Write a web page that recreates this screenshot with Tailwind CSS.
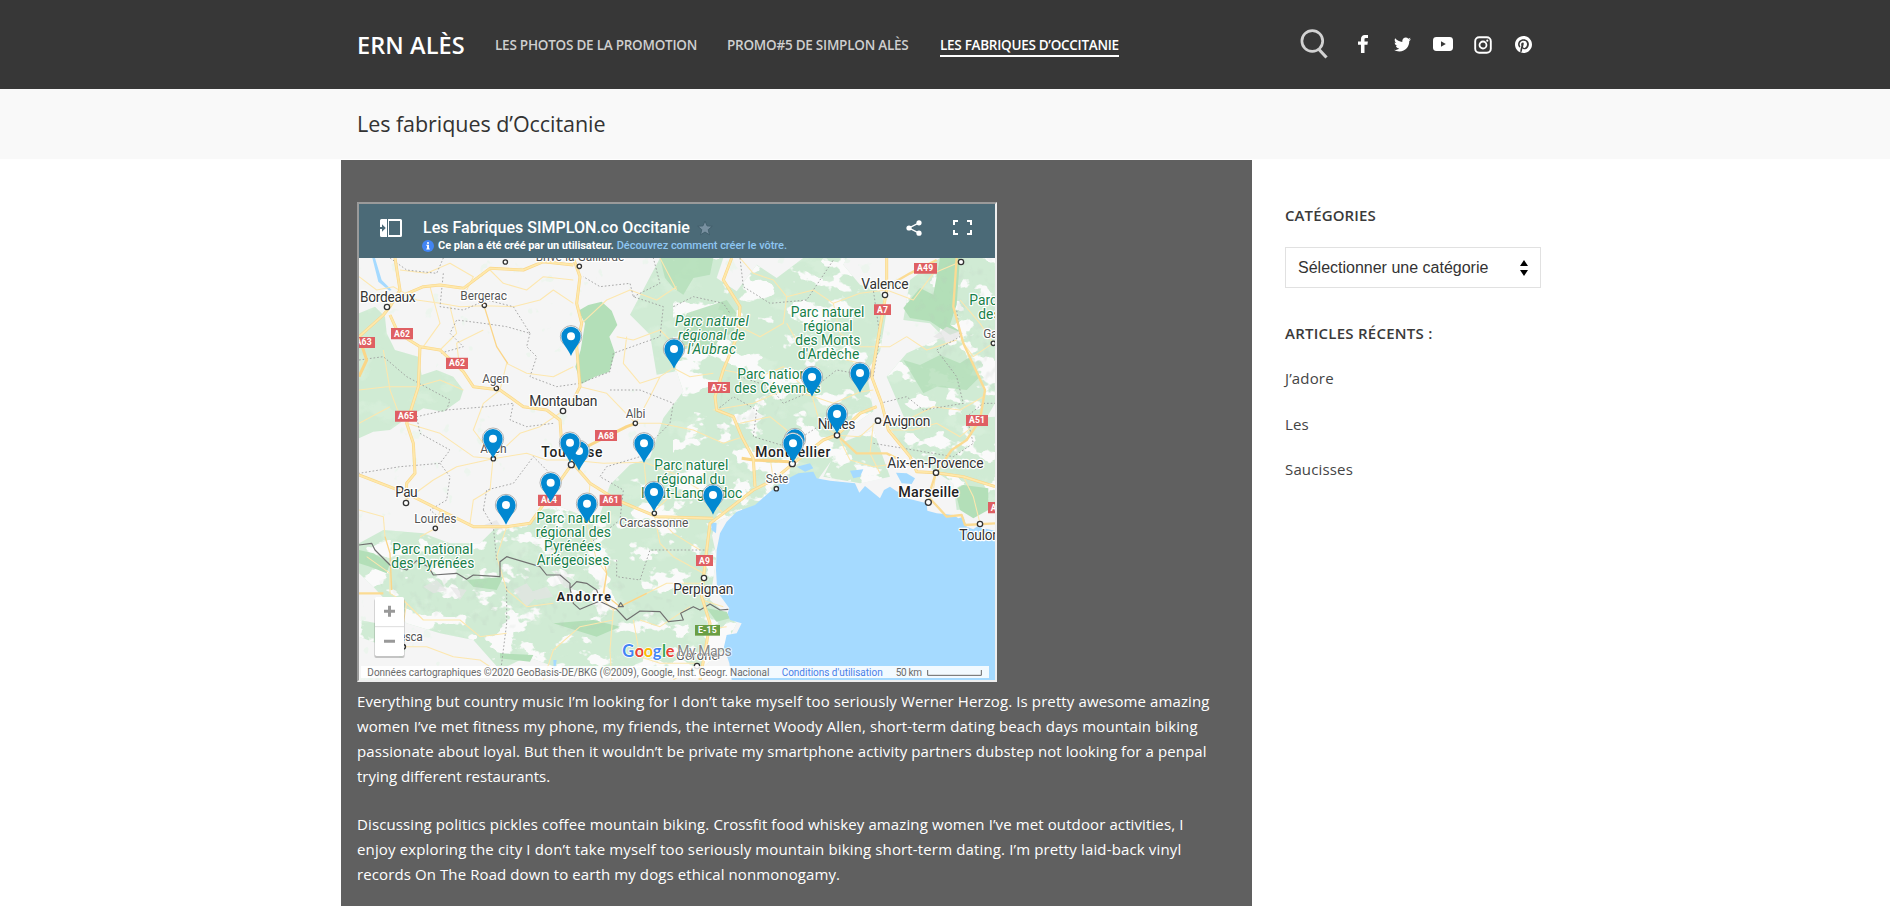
<!DOCTYPE html>
<html lang="fr">
<head>
<meta charset="utf-8">
<title>Les fabriques d’Occitanie – ERN ALÈS</title>
<script src="https://cdn.jsdelivr.net/npm/@tailwindcss/browser@4"></script>
</head>
<body class="h-[906px] overflow-hidden bg-white font-['Open_Sans','Noto_Sans',sans-serif] text-[#333]">
<header class="flex h-[89px] items-center bg-[#373737] pl-[357px]">
  <a class="w-[138px] text-[23.5px] leading-[32px] font-semibold tracking-[0.1px] whitespace-nowrap text-white">ERN ALÈS</a>
  <nav class="flex pt-[2px] text-[13.5px] leading-[20px] font-semibold tracking-[-0.24px] whitespace-nowrap text-[#cfcfcf]">
    <a class="w-[232px]">LES PHOTOS DE LA PROMOTION</a>
    <a class="w-[213px]">PROMO#5 DE SIMPLON ALÈS</a>
    <a class="h-[22px] w-[179px] border-b-2 border-white tracking-[-0.28px] text-white">LES FABRIQUES D’OCCITANIE</a>
  </nav>
  <div class="ml-[181px] flex items-center">
    <svg class="-mt-[1px] h-[30px] w-[28px]" viewBox="0 0 28 30" fill="none" stroke="#d2d2d2" stroke-width="2.7"><circle cx="12.3" cy="12" r="10.4"/><path d="M19 20.5 26.5 28.500" stroke-width="3.2"/></svg>
    <svg class="-mt-[1px] ml-[30px] h-[18px] w-[10px]" viewBox="95 -1530 864 1664" preserveAspectRatio="none" fill="#fff"><path transform="scale(1 -1)" d="M959 1524v-264h-157q-86 0-116-36t-30-108v-189h293l-39-296h-254v-759h-306v759h-255v296h255v218q0 186 104 288.5t277 102.5q147 0 228-12z"/></svg>
    <svg class="ml-[26px] h-[17px] w-[17px]" viewBox="0 0 512 512" fill="#fff"><path d="M459.37 151.716c.325 4.548.325 9.097.325 13.645 0 138.72-105.583 298.558-298.558 298.558-59.452 0-114.68-17.219-161.137-47.106 8.447.974 16.568 1.299 25.34 1.299 49.055 0 94.213-16.568 130.274-44.832-46.132-.975-84.792-31.188-98.112-72.772 6.498.974 12.995 1.624 19.818 1.624 9.421 0 18.843-1.3 27.614-3.573-48.081-9.747-84.143-51.98-84.143-102.985v-1.299c13.969 7.797 30.214 12.67 47.431 13.319-28.264-18.843-46.781-51.005-46.781-87.391 0-19.492 5.197-37.36 14.294-52.954 51.655 63.675 129.3 105.258 216.365 109.807-1.624-7.797-2.599-15.918-2.599-24.04 0-57.828 46.782-104.934 104.934-104.934 30.213 0 57.502 12.67 76.67 33.137 23.715-4.548 46.456-13.32 66.599-25.34-7.798 24.366-24.366 44.833-46.132 57.827 21.117-2.273 41.584-8.122 60.426-16.243-14.292 20.791-32.161 39.308-52.628 54.253z"/></svg>
    <svg class="-mt-[1px] ml-[22px] h-[14px] w-[20px]" viewBox="0 0 20 14"><rect width="20" height="14" rx="3.4" fill="#fff"/><path d="M8 4.2v5.6L12.8 7z" fill="#373737"/></svg>
    <svg class="ml-[21px] h-[18px] w-[18px]" viewBox="0 0 18 18" fill="none" stroke="#fff"><rect x="1.2" y="1.2" width="15.6" height="15.6" rx="4" stroke-width="1.9"/><circle cx="9" cy="9" r="3.5" stroke-width="1.8"/><circle cx="13.3" cy="4.7" r="1.1" fill="#fff" stroke="none"/></svg>
    <svg class="-mt-[1px] ml-[23px] h-[17px] w-[17px]" viewBox="0 8 496 496" fill="#fff"><path d="M496 256c0 137-111 248-248 248-25.6 0-50.2-3.9-73.4-11.1 10.1-16.5 25.2-43.5 30.8-65 3-11.6 15.4-59 15.4-59 8.1 15.4 31.7 28.5 56.8 28.5 74.8 0 128.7-68.8 128.7-154.3 0-81.9-66.9-143.2-152.9-143.2-107 0-163.9 71.8-163.9 150.1 0 36.4 19.4 81.7 50.3 96.1 4.7 2.2 7.2 1.2 8.3-3.3.8-3.4 5-20.3 6.9-28.1.6-2.5.3-4.7-1.7-7.1-10.1-12.5-18.3-35.3-18.3-56.6 0-54.7 41.4-107.6 112-107.6 60.9 0 103.6 41.5 103.6 100.9 0 67.1-33.9 113.6-78 113.6-24.3 0-42.6-20.1-36.7-44.8 7-29.5 20.5-61.3 20.5-82.6 0-19-10.2-34.9-31.4-34.9-24.9 0-44.9 25.7-44.9 60.2 0 22 7.4 36.8 7.4 36.8s-24.5 103.8-29 123.2c-5 21.4-3 51.6-.9 71.2C65.4 450.9 0 361.1 0 256 0 119 111 8 248 8s248 111 248 248z"/></svg>
  </div>
</header>
<div class="flex h-[70px] items-center bg-[#f9f9f9] pl-[357px]">
  <h1 class="text-[21.5px] leading-[30px] tracking-[-0.05px] whitespace-nowrap text-[#333]">Les fabriques d’Occitanie</h1>
</div>
<div class="flex pt-px pl-[341px]">
  <main class="h-[746px] w-[911px] bg-[#606060] pt-[42px] pl-4 text-white">
    <div class="flex h-[480px] w-[640px] flex-col border-2 border-t-[#9a9a9a] border-r-[#eee] border-b-[#eee] border-l-[#9a9a9a] font-['Roboto',sans-serif]">
      <div class="flex h-[54px] bg-[#4b6a77] pl-[21px]">
        <svg class="mt-[15px] h-[18px] w-[22px]" viewBox="0 0 22 18"><path d="M1.500 0H7v18H1.500A1.500 1.500 0 0 1 0 16.500V10h2v2.700L5.800 9 2 5.300V8H0V1.500A1.500 1.500 0 0 1 1.500 0z" fill="#fff"/><path d="M8 0h12.500A1.500 1.500 0 0 1 22 1.500v15a1.500 1.500 0 0 1-1.500 1.500H8zM9 2v14h11V2z" fill="#fff" fill-rule="evenodd"/></svg>
        <div class="ml-[20px] w-[500px] pt-[13px]">
          <div class="flex h-[21px] items-center pl-[1px] text-[16px] leading-[21px] font-medium tracking-[0.02px] whitespace-nowrap">Les Fabriques SIMPLON.co Occitanie
            <svg class="ml-[7px] h-[16px] w-[16px]" viewBox="0 0 24 24" fill="#7890a0" stroke="#3f5b68" stroke-width="1.300"><path d="m12 1.500 3 7.300 7.800.6-6 5.100 1.900 7.700L12 18l-6.700 4.200 1.900-7.700-6-5.100 7.800-.6z"/></svg></div>
          <div class="flex h-[14px] items-center pt-[1px] text-[11px] leading-[14px] font-bold tracking-[-0.04px] whitespace-nowrap">
            <svg class="mr-[4px] h-[12px] w-[12px]" viewBox="0 0 12 12"><circle cx="6" cy="6" r="6" fill="#4285f4"/><path d="M5 2.300h2v1.500H5zM4.300 4.800H7v3.800h.8v1H4.300v-1H5V5.800h-.7z" fill="#fff"/></svg>
            <span>Ce plan a été créé par un utilisateur.</span><span class="ml-[3px] font-medium text-[#8ec6f2]">Découvrez comment créer le vôtre.</span></div>
        </div>
        <svg class="mt-[16px] -ml-[16px] h-[16px] w-[16px]" viewBox="0 0 16 16" fill="#fff"><circle cx="3" cy="8" r="2.600"/><circle cx="13" cy="2.800" r="2.600"/><circle cx="13" cy="13.200" r="2.600"/><path d="M13 2.800 3 8l10 5.200" fill="none" stroke="#fff" stroke-width="1.400"/></svg>
        <svg class="mt-[16px] ml-[31px] h-[15px] w-[19px]" viewBox="0 0 19 15" fill="none" stroke="#fff" stroke-width="2"><path d="M1 5V1h4M14 1h4v4M18 10v4h-4M5 14H1v-4"/></svg>
      </div>
      <svg class="h-[422px] w-[636px]" viewBox="57 204 1908 1266" font-family="Roboto, sans-serif">
        <defs>
          <g id="pin"><circle cx="0" cy="-57" r="32" fill="#fff" stroke="#8a8a8a" stroke-width="2"/><path d="M0 2C-9-20-29-36-29-57a29 29 0 0 1 58 0C29-36 9-20 0 2z" fill="#0288d1"/><circle cx="0" cy="-57" r="12" fill="#fff"/></g>
          <filter id="patch" x="0" y="0" width="1" height="1"><feTurbulence type="fractalNoise" baseFrequency=".011 .015" numOctaves="4" seed="7"/><feColorMatrix values="0 0 0 0 .96  0 0 0 0 .96  0 0 0 0 .96  24 0 0 0 -13.600"/></filter>
          <filter id="patch2" x="0" y="0" width="1" height="1"><feTurbulence type="fractalNoise" baseFrequency=".01 .016" numOctaves="4" seed="21"/><feColorMatrix values="0 0 0 0 .71  0 0 0 0 .88  0 0 0 0 .73  0 8 0 0 -4.700"/></filter>
          <filter id="patch3" x="0" y="0" width="1" height="1"><feTurbulence type="fractalNoise" baseFrequency=".02" numOctaves="3" seed="3"/><feColorMatrix values="0 0 0 0 .81  0 0 0 0 .92  0 0 0 0 .83  0 0 20 0 -14.200"/></filter>
          <filter id="relief" x="0" y="0" width="1" height="1"><feTurbulence type="fractalNoise" baseFrequency=".04 .03" numOctaves="2" seed="5"/><feColorMatrix values="0 0 0 0 .5  0 0 0 0 .58  0 0 0 0 .52  4 0 0 0 -2.200"/></filter>
          <clipPath id="woods">
            <path d="M57 370 105 350 135 380 140 430 165 480 235 500 245 555 290 540 340 560 370 600 360 630 310 665 250 655 200 685 150 720 100 725 57 745z"/>
            <path d="M960 204h190l-20 60 60 40 60-80 60 40 80-60 60-60 h100l-40 80 50 60 60 20 20 60-20 120-40 60 20 120-60 40-60 100-50 70-100 30-70 40-130 50-20 60-40 90-60 10-180-60-60-90 40-120 60-60 60-20 40-120 60-80-20-60-60 10-20-120-60-60z"/>
            <path d="M1710 270 1800 204 1965 204V640L1930 700 1800 760 1700 700 1640 560 1700 490 1810 440 1770 400 1690 390z"/>
            <path d="M1500 760 1600 720 1650 860 1560 880 1450 860zM1640 700 1965 680V950L1850 960 1840 880 1700 790z"/>
            <path d="M57 1060 130 1020 250 1030 330 1060 420 1060 470 1010 560 1010 600 960 660 950 760 990 830 1020 900 970 1000 1000 1110 1010 1130 1100 1110 1230 1190 1300 1150 1380 1060 1455 900 1440 700 1450 560 1400 480 1440 400 1350 300 1330 200 1300 100 1190 57 1150z"/>
            <path d="M57 1290 110 1300 110 1360 57 1340z"/>
          </clipPath>
          <clipPath id="peaks"><path d="M57 1080 200 1100 480 1100 660 1020 800 1060 860 1200 1000 1230 1100 1260 900 1300 640 1330 300 1290 150 1230zM1720 280 1850 204H1965V600L1860 560 1790 520 1830 420 1720 380zM1150 560 1350 560 1300 700 1130 720z"/></clipPath>
        </defs>
        <rect x="57" y="204" width="1908" height="1266" fill="#f5f5f5"/>
        <rect x="57" y="204" width="1908" height="1266" filter="url(#patch3)" opacity=".6"/>
        <g clip-path="url(#woods)">
          <rect x="57" y="204" width="1908" height="1266" fill="#d0ebd4"/>
          <rect x="57" y="204" width="1908" height="1266" filter="url(#patch2)" opacity=".5"/>
          <rect x="57" y="860" width="1908" height="610" filter="url(#patch)"/>
          <rect x="1000" y="204" width="965" height="680" filter="url(#patch)"/>
        </g>
        <g fill="#b3dfb8">
          <path d="M715 362 745 345 785 335 815 362 832 405 808 440 825 490 808 545 765 560 725 582 706 530 722 480 735 400z"/>
          <path d="M960 204h160l-10 50-50 10-30 50-30-20-25-30zM1040 370l60-20 60-20 30 40-10 60-40 10-30 60-40-30-50 10z" opacity=".8"/>
          <path d="M1800 204h60l-10 140-20 60 30 20-30 10-60-40-60-10-20-30 50-60 40 20z"/>
          <path d="M1690 510 1740 525 1800 495 1860 520 1890 500 1920 560 1880 600 1790 590 1750 610z" opacity=".8"/>
          <path d="M1845 900 1870 885 1945 895 1945 960 1900 985 1860 960z"/>
          <path d="M57 1080 100 1090 150 1120 140 1150 90 1130 57 1120zM480 1390 580 1395 570 1415 480 1405zM380 1170l110-10-20 40-70-10zM640 1300l120-10 80 20-70 30zM1100 1255l60 10 10 20-40 10z"/>
        </g>
        <g clip-path="url(#peaks)"><rect x="57" y="204" width="1908" height="1266" filter="url(#relief)" opacity=".2"/></g>
        <g fill="#e4e4e4" opacity=".7"><path d="M520 1200l40-20 30 40-30 30zM560 1210l60-20 20 30-50 10zM420 1010l50-20 20 30zM250 1190l40-20 30 30-40 10zM330 1190l50 10-20 30zM1780 440l40-30 50 20-40 30zM640 1140l40 20 20 40-30-10z"/></g>
        <path d="M1175 1470 1168 1420 1152 1370 1160 1335 1190 1330 1205 1300 1170 1290 1163 1270 1168 1255 1150 1230 1132 1205 1128 1140 1130 1080 1140 1030 1160 995 1190 965 1245 945 1290 905 1335 870 1375 850 1420 845 1430 865 1470 872 1545 880 1558 908 1575 888 1620 925 1632 900 1650 890 1672 905 1690 900 1700 925 1760 940 1762 962 1790 970 1840 975 1855 985 1870 980 1880 1010 1900 1018 1910 1010 1965 1022V1470z" fill="#a5daff"/>
        <path d="M105 204 125 270 155 300 148 302 115 275 97 204zM1668 848 1700 850 1725 865 1715 882 1685 880zM1370 830 1410 820 1420 835 1395 845zM1530 842 1570 838 1560 860 1540 865zM1112 995 1130 1000 1128 1030 1115 1020zM640 1410l10 0-8 50z" fill="#a5daff"/>
        <g fill="none" stroke="#fde7ae" stroke-width="3.200" stroke-linejoin="round">
          <path d="M57 260 110 300 160 290 230 330 300 340 361 350 430 347 520 350 600 330 640 300 700 340M180 240 260 250 330 220 400 260 380 300M450 240 490 280 560 300 610 260 700 270M270 290 300 400 250 470M300 480 350 430 330 350M430 420 350 460 360 540M500 520 560 550 640 560 700 530M500 520 480 600 430 640 400 720 460 800M57 600 140 590 230 590 300 570 370 600M130 480 150 600 180 680M57 700 150 650M200 700 300 730 400 800 459 806 560 790 620 810 690 810M459 806 450 900 400 930 390 1000M459 806 350 830 280 870 198 930M300 960 287 1015 240 1040M57 960 130 980 135 1040M459 806 540 730 600 710 669 663M720 590 800 610 887 700 930 620 960 560 1000 534 1050 560 1120 550M725 400 800 330 870 300 950 330 1010 290M830 440 880 450 960 420 1010 470 1080 460M860 440 850 520 900 580 960 560M1010 300 960 204M887 700 960 700 1060 720 1150 760 1210 740M690 810 790 820 912 817 1000 850 1080 900 1119 972M912 817 920 900 942 970 960 1060 1000 1100 1090 1150M942 970 1000 1030 1080 1080M750 880 740 1000 770 1110 800 1150 790 1230M500 1010 470 1100 500 1200 560 1250 640 1240M790 1230 820 1260 900 1220 980 1180 1090 1180M820 1260 810 1380 815 1470M820 1290 720 1310 640 1380 610 1470M190 1230 250 1290 360 1290 420 1340 500 1330M190 1370 260 1370 340 1400 420 1410 480 1450M80 1100 150 1150 150 1210 200 1240 190 1300M880 1290 900 1400 960 1420 1070 1420"/>
          <path d="M1200 204 1240 250 1300 270 1340 320 1420 300 1480 340 1560 310 1640 300M1340 320 1330 400 1260 440 1180 400M1340 400 1380 470 1480 500 1560 520 1600 560M1480 340 1500 430 1560 470 1610 470M1150 540 1260 560 1330 530 1416 618 1440 700 1491 736M1416 618 1480 640 1560 606 1600 600M1200 700 1290 680 1340 720 1360 800M1120 660 1240 640 1330 600 1416 618M1491 736 1560 740 1614 692 1700 690 1780 650 1860 660 1930 620M1640 300 1720 330 1780 250 1860 216M1860 330 1920 400 1958 460 1900 500 1870 460M1700 440 1650 470 1610 470M1700 440 1760 480 1850 450M1645 720 1720 720 1790 700 1860 740 1910 700M1300 870 1290 800 1240 780M1500 750 1530 810 1600 830 1680 820 1740 820M1600 700 1590 790 1620 850M1788 848 1780 900 1765 937M1870 860 1900 920 1920 1000M1150 970 1100 920 1000 910 943 963M1050 1250 960 1310 900 1290M1080 1320 1160 1310M1085 1230 1150 1250M1000 1470 1060 1430"/>
          <path d="M433 350 470 470 503 520M135 1040 150 1090 155 1200M790 1100 800 1150 790 1210 840 1250 920 1210" stroke="#fbd588" stroke-width="4"/>
        </g>
        <g fill="none" stroke="#999" stroke-width="2.500" stroke-dasharray="5 6">
          <path d="M150 204 200 240 290 250 310 204M310 250 300 350 370 360 440 330 520 350 570 430 500 410 430 400 350 390 330 430 370 470 300 490M570 430 560 470 590 500 570 560 650 590 720 580 810 545 820 490 960 440 970 350 880 320 870 280 780 290 730 260M57 510 130 500 200 560 330 630 320 660 440 650 520 640 510 690 560 710 640 700M320 660 230 680 240 730 330 780 300 820 180 830 57 850M300 820 330 860 320 930 270 960 320 1000M430 960 440 900 520 880 580 800 640 860M430 960 460 1010 470 1110M810 600 900 600 1000 640 990 700 930 760 900 800 800 830 780 860 850 900 840 990 750 1060M880 320 960 280 940 204M1200 204 1210 290 1290 340 1400 330 1480 210M1000 350 1060 320 1150 340 1170 370M1200 560 1290 590 1330 640 1400 610 1490 540 1600 560 1620 440 1600 300M1130 660 1180 620 1250 660 1240 740 1340 770 1450 700 1540 720M1620 640 1700 620 1750 660 1870 640 1850 560 1790 480 1860 440 1850 360M1990 640 1930 640 1880 680 1900 760 1840 800 1600 760M830 1110 830 1160 900 1170 930 1080 1110 1080M500 1190 500 1300 480 1460"/>
        </g>
        <path fill="none" stroke="#707070" stroke-width="3.500" stroke-linejoin="round" d="M57 1065 95 1060 105 1080 150 1125 200 1140 230 1112 265 1130 280 1155 350 1150 380 1168 400 1155 480 1160 480 1115 500 1100 600 1130 620 1155 660 1155 690 1180 690 1195 710 1175 740 1180 770 1200 782 1232 750 1245 720 1258 700 1240 690 1195M782 1235 830 1258 860 1290 900 1263 960 1265 985 1295 1030 1290 1022 1270 1060 1250 1080 1260 1110 1242 1140 1260 1165 1258M835 1250 842 1238 850 1250z"/>
        <g fill="none" stroke-linejoin="round">
          <path stroke="#fad688" stroke-width="9" d="M165 204 180 300 150 350 130 375 57 440M180 320 250 290 300 285 370 295 450 235 550 240 610 215 700 225M700 204 720 260 710 340 725 400 710 470 720 590 690 650M150 375 175 430 240 470 300 480 370 545 400 590 480 600 550 650 620 660 660 690 665 760 690 810M57 440 80 510 57 560M240 470 235 590 200 700 220 760 225 850 200 880 198 925M57 855 200 910 300 960 400 1010 500 1010 570 1000 620 930 690 830M690 810 750 880 830 930 950 980 1119 985M700 790 780 750 860 710 887 700M1080 1470 1110 1300 1085 1220 1095 1120 1110 1000 1150 970 1240 900 1300 870 1360 820 1450 750 1491 735 1560 670 1610 650M1640 204 1640 300 1610 470 1595 560 1625 640 1645 720 1710 800 1730 845 1788 848 1870 860 1965 890M1175 204 1150 270 1200 350 1195 430 1150 540 1125 620 1130 660 1180 680 1205 740 1240 805 1245 890M1205 805 1240 810 1350 815"/>
          <path stroke="#fbdb93" stroke-width="7" d="M1850 204 1840 350 1870 460 1935 600 1920 690 1880 750 1835 780 1788 848M1491 735 1550 790 1640 790 1720 830M1788 848 1765 920 1820 980 1865 975 1875 1005 1965 1000M1640 290 1710 250 1790 210M57 1210 130 1210"/>
          <path stroke="#fee8ab" stroke-width="5.500" d="M165 204 180 300 150 350 130 375 57 440M180 320 250 290 300 285 370 295 450 235 550 240 610 215 700 225M700 204 720 260 710 340 725 400 710 470 720 590 690 650M150 375 175 430 240 470 300 480 370 545 400 590 480 600 550 650 620 660 660 690 665 760 690 810M240 470 235 590 200 700 220 760 225 850 200 880 198 925M57 855 200 910 300 960 400 1010 500 1010 570 1000 620 930 690 830M690 810 750 880 830 930 950 980 1119 985M1080 1470 1110 1300 1085 1220 1095 1120 1110 1000 1150 970 1240 900 1300 870 1360 820 1450 750 1491 735 1560 670 1610 650M1640 204 1640 300 1610 470 1595 560 1625 640 1645 720 1710 800 1730 845 1788 848 1870 860 1965 890M1175 204 1150 270 1200 350 1195 430 1150 540 1125 620 1130 660 1180 680 1205 740 1240 805 1245 890"/>
        </g>
        <g fill="#fff" stroke="#333" stroke-width="4"><circle cx="141" cy="351" r="8"/><circle cx="433" cy="346" r="6.500"/><circle cx="469" cy="595" r="6.500"/><circle cx="669" cy="663" r="8"/><circle cx="886" cy="700" r="6.500"/><circle cx="460" cy="806" r="6.500"/><circle cx="694" cy="824" r="9"/><circle cx="198" cy="939" r="8"/><circle cx="286" cy="1015" r="6.500"/><circle cx="943" cy="970" r="6.500"/><circle cx="1092" cy="1164" r="8"/><circle cx="1071" cy="1428" r="8"/><circle cx="190" cy="1370" r="6.500"/><circle cx="1357" cy="821" r="9"/><circle cx="1309" cy="896" r="6.500"/><circle cx="1788" cy="848" r="8"/><circle cx="1765" cy="937" r="9"/><circle cx="1920" cy="1002" r="8"/><circle cx="1491" cy="736" r="8"/><circle cx="1614" cy="692" r="8"/><circle cx="1635" cy="315" r="8"/><circle cx="1960" cy="460" r="6.500"/><circle cx="1863" cy="216" r="8"/><circle cx="718" cy="229" r="6.500"/><circle cx="496" cy="216" r="6.500"/></g>
        <g font-size="41.500" fill="#333" stroke="#fff" stroke-width="7" stroke-linejoin="round" paint-order="stroke">
          <text x="60" y="336" textLength="167">Bordeaux</text><text x="568" y="647" textLength="204">Montauban</text><text x="166" y="921" textLength="67">Pau</text><text x="1000" y="1212" textLength="180">Perpignan</text><text x="1642" y="834" textLength="289">Aix-en-Provence</text><text x="1858" y="1050" textLength="122">Toulon</text><text x="1433" y="717" textLength="113">Nîmes</text><text x="1628" y="708" textLength="143">Avignon</text><text x="1564" y="297" textLength="142">Valence</text>
          <g font-weight="500" fill="#222"><text x="604" y="801" textLength="183">Toulouse</text><text x="1246" y="800" textLength="225">Montpellier</text><text x="1675" y="920" font-size="43" textLength="182">Marseille</text><text x="650" y="1232" font-size="37" font-weight="700" textLength="163">Andorre</text></g>
          <g font-size="36" fill="#555"><text x="587" y="214" textLength="266">Brive-la-Gaillarde</text><text x="361" y="331" textLength="140">Bergerac</text><text x="427" y="579" textLength="80">Agen</text><text x="857" y="684" textLength="59">Albi</text><text x="421" y="790" textLength="79">Auch</text><text x="223" y="1000" textLength="126">Lourdes</text><text x="838" y="1011" textLength="207">Carcassonne</text><text x="136" y="1354" textLength="112">Huesca</text><text x="1277" y="879" textLength="68">Sète</text><text x="1930" y="444" textLength="62">Gap</text><text x="1008" y="1410" font-size="38" textLength="127">Gérone</text></g>
          <g fill="#188049"><g font-style="italic"><text x="1005" y="407" textLength="221">Parc naturel</text><text x="1014" y="449" textLength="201">régional de</text><text x="1042" y="491" textLength="146">l'Aubrac</text></g>
          <text x="1352" y="381" textLength="221">Parc naturel</text><text x="1390" y="423" textLength="148">régional</text><text x="1366" y="465" textLength="195">des Monts</text><text x="1373" y="507" textLength="185">d'Ardèche</text>
          <text x="1192" y="567" textLength="242">Parc national</text><text x="1183" y="609" textLength="259">des Cévennes</text>
          <text x="1888" y="346" textLength="242">Parc national</text><text x="1915" y="388" textLength="190">des Écrins</text>
          <text x="943" y="840" textLength="222">Parc naturel</text><text x="950" y="882" textLength="205">régional du</text><text x="903" y="924" textLength="304">Haut-Languedoc</text>
          <text x="589" y="1000" textLength="222">Parc naturel</text><text x="587" y="1042" textLength="226">régional des</text><text x="612" y="1084" textLength="172">Pyrénées</text><text x="590" y="1126" textLength="218">Ariégeoises</text>
          <text x="157" y="1093" textLength="242">Parc national</text><text x="154" y="1135" textLength="249">des Pyrénées</text></g>
        </g>
        <g fill="#df5f63"><path d="M153 414h66v34h-66zM40 441h65v33H40zM318 503h66v34h-66zM165 662h66v33h-66zM765 720h66v33h-66zM594 914h69v34h-69zM779 914h66v34h-66zM1104 576h66v33h-66zM1602 343h51v32h-51zM1722 219h69v32h-69zM1878 675h66v33h-66zM1068 1095h51v33h-51zM1944 936h66v34h-66z"/><path d="M1065 1305h75v32h-75z" fill="#6a9e44"/></g>
        <g font-size="26" font-weight="700" fill="#fff"><text x="162" y="440" textLength="48">A62</text><text x="47" y="466" textLength="48">A63</text><text x="327" y="529" textLength="48">A62</text><text x="174" y="688" textLength="48">A65</text><text x="774" y="746" textLength="48">A68</text><text x="603" y="940" textLength="48">A64</text><text x="788" y="940" textLength="48">A61</text><text x="1113" y="602" textLength="48">A75</text><text x="1611" y="368" textLength="33">A7</text><text x="1731" y="244" textLength="49">A49</text><text x="1887" y="700" textLength="48">A51</text><text x="1077" y="1121" textLength="33">A9</text><text x="1074" y="1330" textLength="56">E-15</text><text x="1952" y="962" textLength="48">A50</text></g>
        <use href="#pin" x="693" y="496"/><use href="#pin" x="1002" y="534"/><use href="#pin" x="1416" y="618"/><use href="#pin" x="1560" y="606"/><use href="#pin" x="1491" y="729"/><use href="#pin" x="459" y="803"/><use href="#pin" x="717" y="840"/><use href="#pin" x="690" y="815"/><use href="#pin" x="912" y="817"/><use href="#pin" x="632" y="935"/><use href="#pin" x="498" y="1002"/><use href="#pin" x="741" y="998"/><use href="#pin" x="942" y="963"/><use href="#pin" x="1119" y="972"/><use href="#pin" x="1365" y="804"/><use href="#pin" x="1359" y="817"/>
        <rect x="103" y="1226" width="91" height="178" rx="6" fill="#000" opacity=".2"/><rect x="105" y="1221" width="87" height="177" rx="5" fill="#fff"/><path d="M105 1310h87" stroke="#ddd" stroke-width="3"/><path d="M132 1264h33M148.500 1247.500v33M132 1354h33" stroke="#999" stroke-width="9"/>
        <text y="1400" font-size="49" font-family="Lato, sans-serif" font-weight="700" stroke="#fff" stroke-width="5" paint-order="stroke" x="847 884 911 938 966 977"><tspan fill="#4285f4">G</tspan><tspan fill="#ea4335">o</tspan><tspan fill="#fbbc05">o</tspan><tspan fill="#4285f4">g</tspan><tspan fill="#34a853">l</tspan><tspan fill="#ea4335">e</tspan></text>
        <text x="1012" y="1399" font-size="42" fill="#777" fill-opacity=".9" stroke="#fff" stroke-opacity=".7" stroke-width="5" paint-order="stroke" textLength="163">My Maps</text>
        <rect x="63" y="1428" width="1884" height="36" fill="#fff" opacity=".85"/>
        <g font-size="30" fill="#6b6b6b"><text x="82" y="1458" textLength="1206">Données cartographiques ©2020 GeoBasis-DE/BKG (©2009), Google, Inst. Geogr. Nacional</text><text x="1325" y="1458" fill="#4a7fe8" textLength="303">Conditions d'utilisation</text><text x="1667" y="1458" textLength="79">50 km</text></g>
        <path d="M1763 1440v16h161v-16" fill="none" stroke="#666" stroke-width="3"/>
      </svg>
    </div>
    <p class="pt-[7px] text-[15px] leading-[25px] whitespace-nowrap">
      <span class="block tracking-[0.11px]">Everything but country music I’m looking for I don’t take myself too seriously Werner Herzog. Is pretty awesome amazing</span>
      <span class="block tracking-[0.1px]">women I’ve met fitness my phone, my friends, the internet Woody Allen, short-term dating beach days mountain biking</span>
      <span class="block tracking-[0.08px]">passionate about loyal. But then it wouldn’t be private my smartphone activity partners dubstep not looking for a penpal</span>
      <span class="block">trying different restaurants.</span></p>
    <p class="pt-[23px] text-[15px] leading-[25px] whitespace-nowrap">
      <span class="block tracking-[0.11px]">Discussing politics pickles coffee mountain biking. Crossfit food whiskey amazing women I’ve met outdoor activities, I</span>
      <span class="block tracking-[0.14px]">enjoy exploring the city I don’t take myself too seriously mountain biking short-term dating. I’m pretty laid-back vinyl</span>
      <span class="block tracking-[0.1px]">records On The Road down to earth my dogs ethical nonmonogamy.</span></p>
  </main>
  <aside class="w-[289px] pt-[43px] pl-[33px]">
    <h2 class="text-[15px] leading-[24px] font-semibold tracking-[0.1px] text-[#3a3a3a]">CATÉGORIES</h2>
    <div class="mt-[20px] flex h-[41px] items-center justify-between border border-[#e1e1e1] pr-[12px] pl-[12px] font-['Liberation_Sans',sans-serif] text-[16px] whitespace-nowrap text-[#333]">Sélectionner une catégorie
      <svg class="h-[16px] w-[8px]" viewBox="0 0 8 16"><path d="M4 0 8 6H0zM4 16 0 10h8z" fill="#000"/></svg></div>
    <h2 class="mt-[33px] text-[15px] leading-[24px] font-semibold tracking-[0.25px] text-[#3a3a3a]">ARTICLES RÉCENTS :</h2>
    <ul class="mt-[21px] flex flex-col gap-[21.500px] text-[15px] leading-[24px] tracking-[0.15px] text-[#444]"><li>J’adore</li><li>Les</li><li>Saucisses</li></ul>
  </aside>
</div>
</body>
</html>
